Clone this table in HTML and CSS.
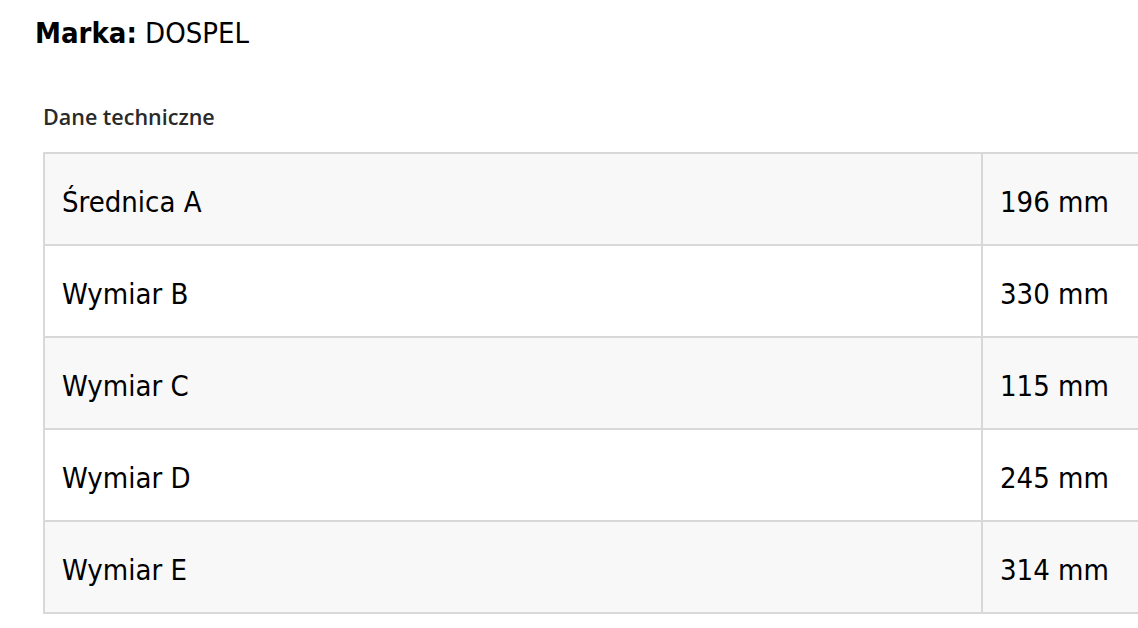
FILE: index.html
```html
<!DOCTYPE html>
<html lang="pl">
<head>
<meta charset="utf-8">
<link rel="stylesheet" href="styles.css">
</head>
<body>
<div class="page">
  <p class="brand"><strong>Marka:</strong> DOSPEL</p>
  <section class="specs">
    <h3 class="specs-title">Dane techniczne</h3>
    <table class="spec-table">
      <colgroup><col class="col-name"><col class="col-val"></colgroup>
      <tr><td class="name">Średnica A</td><td class="val">196 mm</td></tr>
      <tr><td class="name">Wymiar B</td><td class="val">330 mm</td></tr>
      <tr><td class="name">Wymiar C</td><td class="val">115 mm</td></tr>
      <tr><td class="name">Wymiar D</td><td class="val">245 mm</td></tr>
      <tr><td class="name">Wymiar E</td><td class="val">314 mm</td></tr>
    </table>
  </section>
</div>
</body>
</html>
```
FILE: styles.css
```css
html, body {
  margin: 0;
  padding: 0;
  background: #ffffff;
}
.page {
  padding: 14px 0 0 35px;
  overflow: hidden;
  width: 1103px;
}
.brand {
  margin: 0;
  font-family: "DejaVu Sans Condensed", "DejaVu Sans", sans-serif;
  font-stretch: condensed;
  font-size: 29px;
  line-height: 38px;
  color: #000;
}
.brand strong {
  font-weight: bold;
}
.specs {
  padding: 0 0 0 8px;
}
.specs-title {
  margin: 51px 0 21px;
  font-family: "Open Sans", sans-serif;
  font-weight: 600;
  font-size: 21.5px;
  line-height: 28px;
  color: #2a2a2a;
}
.spec-table {
  border-collapse: collapse;
  table-layout: fixed;
  width: 1160px;
  font-family: "DejaVu Sans Condensed", "DejaVu Sans", sans-serif;
  font-stretch: condensed;
  font-size: 29px;
  color: #000;
}
.col-name {
  width: 938px;
}
.col-val {
  width: 222px;
}
.spec-table td {
  border: 2px solid #d8d8d8;
  height: 92px;
  padding: 6px 17px 0;
  box-sizing: border-box;
  white-space: nowrap;
}
.spec-table tr:nth-child(odd) td {
  background: #f8f8f8;
}
.spec-table .val {
  padding-left: 17px;
}
```
